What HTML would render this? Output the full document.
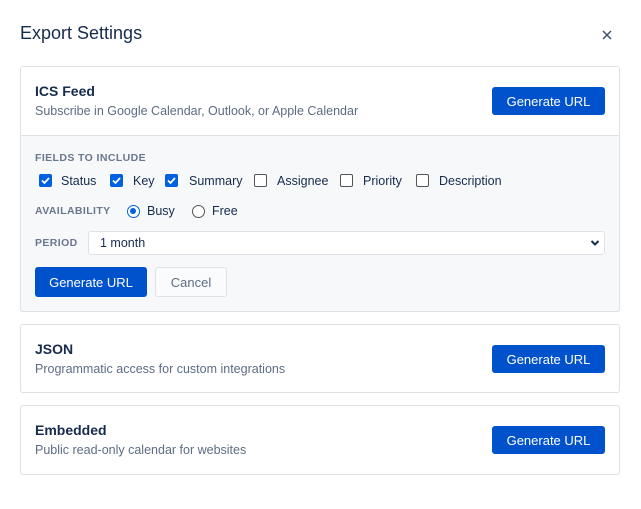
<!DOCTYPE html><html><head><style>
*{box-sizing:border-box;margin:0;padding:0}
body{width:641px;height:509px;background:#fff;font-family:"Liberation Sans",sans-serif;color:#172b4d;position:relative;overflow:hidden}
.a{position:absolute;white-space:nowrap}
.card{position:absolute;left:20px;width:600px;border:1px solid #dfe1e6;border-radius:3px;background:#fff}
.t{font-size:14px;font-weight:bold;color:#172b4d}
.d{font-size:12.5px;color:#5e6c84}
.btn{position:absolute;background:#0052cc;color:#fff;font-size:13px;border-radius:3px;display:flex;align-items:center;justify-content:center}
.lab{font-size:10.5px;font-weight:bold;color:#6b778c;letter-spacing:.4px}
.cb{position:absolute;width:13px;height:13px;border-radius:2px;top:174px}
.on{background:#0060df}
.off{border:1.3px solid #555;background:#fff}
.cl{position:absolute;top:174px;font-size:12.5px;color:#172b4d}
</style></head><body>
<div class="a" style="left:20px;top:23px;font-size:18px;color:#172b4d">Export Settings</div>
<svg class="a" style="left:602px;top:30px" width="10" height="10"><path d="M1 1L9 9M9 1L1 9" stroke="#42526e" stroke-width="1.5"/></svg>

<div class="card" style="top:66px;height:246px;background:#f7f8fa">
<div style="height:69px;background:#fff;border-bottom:1px solid #dfe1e6"></div>
</div>
<div class="a t" style="left:35px;top:83px">ICS Feed</div>
<div class="a d" style="left:35px;top:104px">Subscribe in Google Calendar, Outlook, or Apple Calendar</div>
<div class="btn" style="left:492px;top:87px;width:113px;height:28px">Generate URL</div>

<div class="a lab" style="left:35px;top:152px">FIELDS TO INCLUDE</div>
<svg class="cb on" style="left:39px"><path d="M3 6.5l2.5 2.5 4.5-5" stroke="#fff" stroke-width="1.8" fill="none"/></svg>
<div class="cl" style="left:61px">Status</div>
<svg class="cb on" style="left:110px"><path d="M3 6.5l2.5 2.5 4.5-5" stroke="#fff" stroke-width="1.8" fill="none"/></svg>
<div class="cl" style="left:133px">Key</div>
<svg class="cb on" style="left:165px"><path d="M3 6.5l2.5 2.5 4.5-5" stroke="#fff" stroke-width="1.8" fill="none"/></svg>
<div class="cl" style="left:189px">Summary</div>
<div class="cb off" style="left:254px"></div><div class="cl" style="left:277px">Assignee</div>
<div class="cb off" style="left:340px"></div><div class="cl" style="left:363px">Priority</div>
<div class="cb off" style="left:416px"></div><div class="cl" style="left:439px">Description</div>

<div class="a lab" style="left:35px;top:205px">AVAILABILITY</div>
<div class="a" style="left:127px;top:205px;width:13px;height:13px;border-radius:50%;border:1.5px solid #0060df;background:#fff"><div style="position:absolute;left:2px;top:2px;width:6px;height:6px;border-radius:50%;background:#0060df"></div></div>
<div class="a" style="left:147px;top:204px;font-size:12.5px">Busy</div>
<div class="a" style="left:192px;top:205px;width:13px;height:13px;border-radius:50%;border:1.3px solid #555;background:#fff"></div>
<div class="a" style="left:212px;top:204px;font-size:12.5px">Free</div>

<div class="a lab" style="left:35px;top:237px">PERIOD</div>
<div class="a" style="left:88px;top:231px;width:517px;height:24px;border:1px solid #dfe1e6;border-radius:3px;background:#fff"></div>
<div class="a" style="left:100px;top:236px;font-size:12.5px">1 month</div>
<svg class="a" style="left:590px;top:239px" width="10" height="8"><path d="M1.5 2l3.5 3.5L8.5 2" stroke="#172b4d" stroke-width="2" fill="none"/></svg>

<div class="btn" style="left:35px;top:267px;width:112px;height:30px">Generate URL</div>
<div class="a" style="left:155px;top:267px;width:72px;height:30px;border:1px solid #dfe1e6;border-radius:3px;background:#fafbfc;color:#5e6c84;font-size:13px;display:flex;align-items:center;justify-content:center">Cancel</div>

<div class="card" style="top:324px;height:69px"></div>
<div class="a t" style="left:35px;top:341px">JSON</div>
<div class="a d" style="left:35px;top:362px">Programmatic access for custom integrations</div>
<div class="btn" style="left:492px;top:345px;width:113px;height:28px">Generate URL</div>

<div class="card" style="top:405px;height:70px"></div>
<div class="a t" style="left:35px;top:422px">Embedded</div>
<div class="a d" style="left:35px;top:443px">Public read-only calendar for websites</div>
<div class="btn" style="left:492px;top:426px;width:113px;height:28px">Generate URL</div>
</body></html>
